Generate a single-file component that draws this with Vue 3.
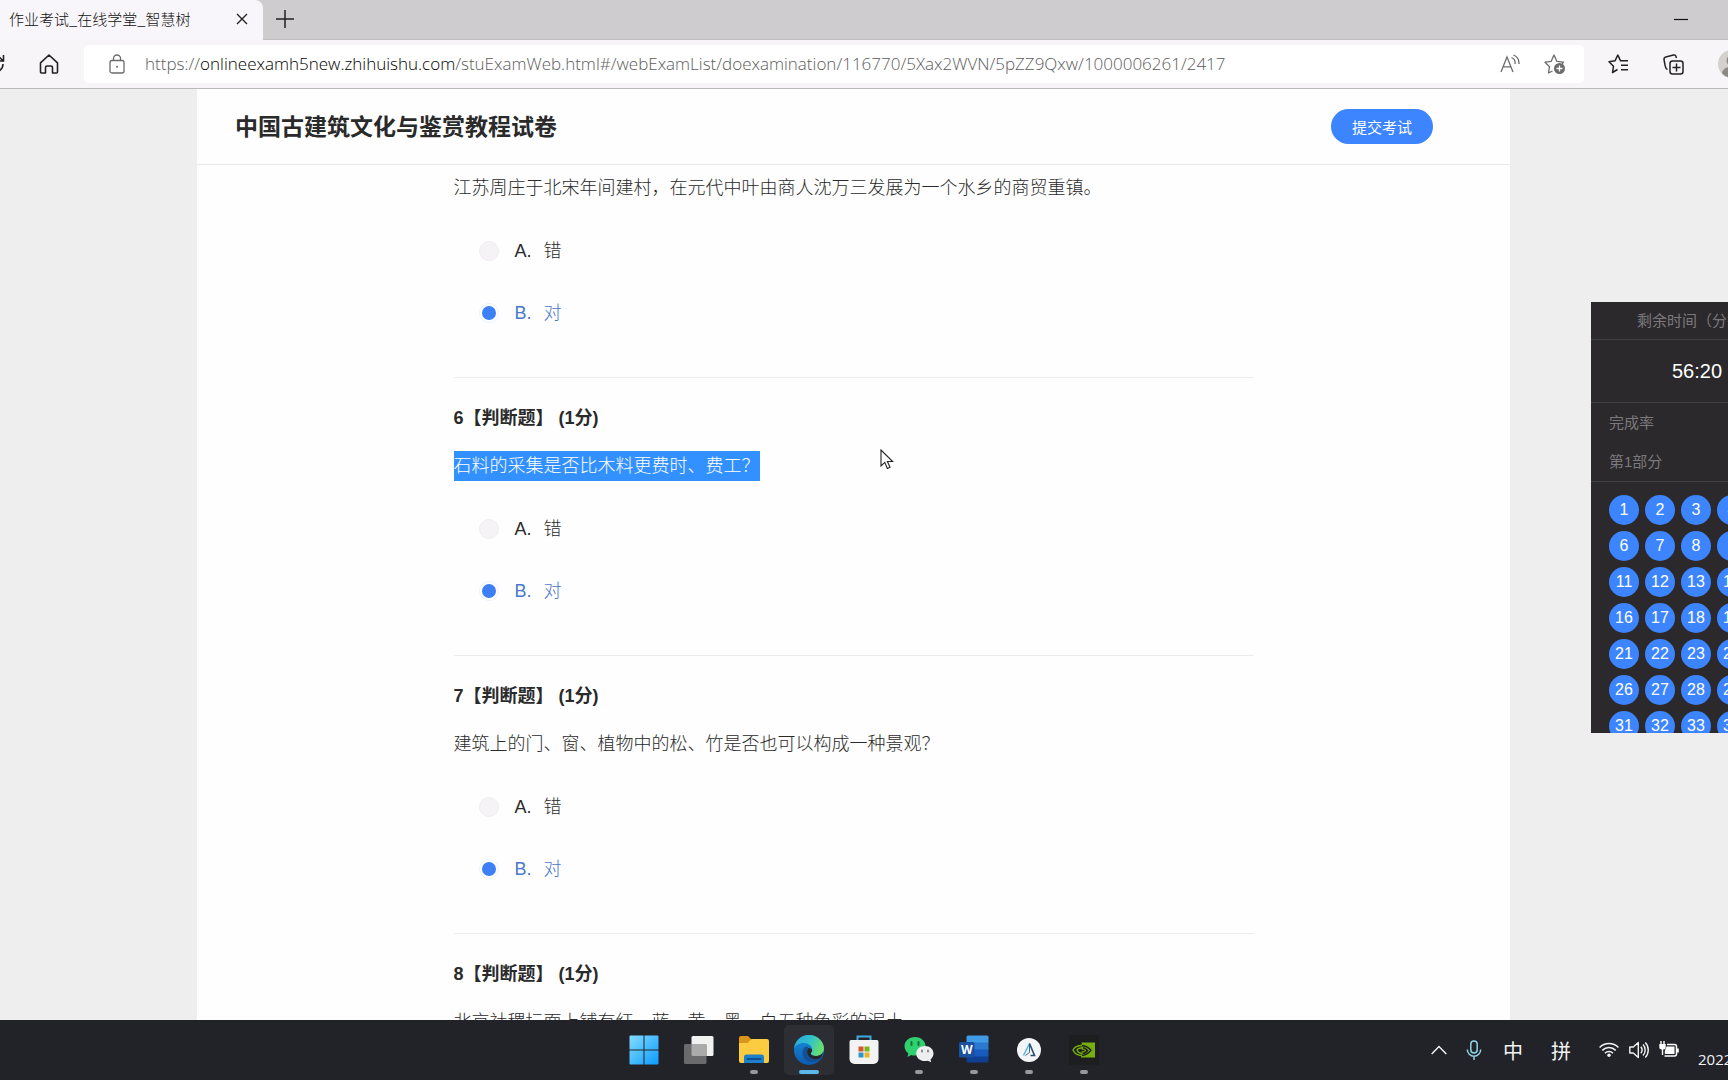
<script setup>
import { ref } from 'vue'

const questions = ref([
  {
    id: 5,
    text: '江苏周庄于北宋年间建村，在元代中叶由商人沈万三发展为一个水乡的商贸重镇。',
    answer: 'B',
  },
  { id: 6, title: '6【判断题】 (1分)', text: '石料的采集是否比木料更费时、费工？', answer: 'B', selected: true },
  { id: 7, title: '7【判断题】 (1分)', text: '建筑上的门、窗、植物中的松、竹是否也可以构成一种景观？', answer: 'B' },
  { id: 8, title: '8【判断题】 (1分)', text: '北京社稷坛面上铺有红、蓝、黄、黑、白五种色彩的泥土' },
])
const options = [
  { key: 'A', label: '错' },
  { key: 'B', label: '对' },
]
const numbers = Array.from({ length: 35 }, (_, i) => i + 1)
</script>

<template>
  <div class="screen">
    <header class="tabs">
      <div class="tab">
        <span class="tab-name">作业考试_在线学堂_智慧树</span>
        <button class="icon" aria-label="关闭标签页">
          <svg width="12" height="12" viewBox="0 0 12 12"><path d="M1 1l10 10M11 1L1 11" stroke="#222" stroke-width="1.4" fill="none" /></svg>
        </button>
      </div>
      <button class="icon plus" aria-label="新建标签页">
        <svg width="18" height="18" viewBox="0 0 18 18"><path d="M9 0v18M0 9h18" stroke="#222" stroke-width="1.5" fill="none" /></svg>
      </button>
      <button class="icon minimize" aria-label="最小化">
        <svg width="14" height="14" viewBox="0 0 14 14"><path d="M0 7.500h14" stroke="#111" stroke-width="1.2" /></svg>
      </button>
    </header>

    <nav class="toolbar">
      <button class="icon refresh" aria-label="刷新">
        <svg width="20" height="20" viewBox="0 0 20 20" fill="none" stroke="#222" stroke-width="1.6"><path d="M18 10a8 8 0 1 1-2.500-5.800L18 7M18.500 1v6h-6" /></svg>
      </button>
      <button class="icon home" aria-label="主页">
        <svg width="20" height="20" viewBox="0 0 20 20" fill="none" stroke="#222" stroke-width="1.600" stroke-linejoin="round"><path d="M1.500 8.800L10 1l8.500 7.800V18a1 1 0 0 1-1 1h-4v-5.500a1.500 1.500 0 0 0-1.500-1.500H8a1.500 1.500 0 0 0-1.500 1.500V19h-4a1 1 0 0 1-1-1z" /></svg>
      </button>
      <div class="address">
        <svg class="lock" width="16" height="20" viewBox="0 0 16 20" fill="none" stroke="#6b6b6b" stroke-width="1.300"><rect x="1" y="6.500" width="14" height="12.500" rx="2" /><path d="M4.500 6.500V4.500a3.500 3.500 0 0 1 7 0v2" /><circle cx="8" cy="12.800" r="1" fill="#6b6b6b" stroke="none" /></svg>
        <div class="url" role="textbox" aria-label="地址栏" tabindex="0">https://<b>onlineexamh5new.zhihuishu.com</b>/stuExamWeb.html#/webExamList/doexamination/116770/5Xax2WVN/5pZZ9Qxw/1000006261/2417</div>
        <button class="icon" aria-label="大声朗读">
          <svg width="20" height="20" viewBox="0 0 20 20" fill="none" stroke="#6b6b6b" stroke-width="1.300"><path d="M1 18L7 3l6 15M3.200 12.800h7.600M11.500 3.500a6 6 0 0 1 3.500 6.500M13.500 1a9 9 0 0 1 5.500 9" /></svg>
        </button>
        <button class="icon" aria-label="收藏">
          <svg width="22" height="22" viewBox="0 0 22 22" fill="none" stroke="#6b6b6b" stroke-width="1.300" stroke-linejoin="round"><path d="M8.500 18L4.500 20l1-6.300L1 9.200l6.200-.9L10 2l2.800 6.300 6.700.9-1.500 1.500" /><circle cx="15.500" cy="15.500" r="5.500" fill="#6b6b6b" stroke="none" /><path d="M15.500 12.500v6M12.500 15.500h6" stroke="#fff" /></svg>
        </button>
      </div>
      <div class="tools">
        <button class="icon" aria-label="收藏夹">
          <svg width="21" height="20" viewBox="0 0 21 20" fill="none" stroke="#222" stroke-width="1.500" stroke-linejoin="round"><path d="M9.500 15.500L4.500 18.500l1-6.200L1 7.700l6-.9L9.800 1l2.800 5.800H20M13 11.300h7M13 15.800h7" /></svg>
        </button>
        <button class="icon" aria-label="集锦">
          <svg width="21" height="21" viewBox="0 0 21 21" fill="none" stroke="#222" stroke-width="1.500" stroke-linejoin="round"><rect x="7" y="7" width="13" height="13" rx="2.500" /><path d="M13.500 9.500v8M9.500 13.500h8M4.500 15.500C2.500 15 2.500 13 2 11L1 5.500Q.7 3.500 2.800 3L10.500 1q2-.5 2.500 1.500l.4 1.500" /></svg>
        </button>
        <button class="icon avatar" aria-label="用户">
          <svg width="28" height="28" viewBox="0 0 28 28"><circle cx="14" cy="14" r="14" fill="#d3d0ce" /><circle cx="14" cy="10.500" r="5.500" fill="#8b8886" /><path d="M4 23.500a10 7 0 0 1 20 0A14 14 0 0 1 4 23.500z" fill="#8b8886" /></svg>
        </button>
      </div>
    </nav>

    <main class="page">
      <div class="sheet">
        <div class="sheet-head">
          <h1>中国古建筑文化与鉴赏教程试卷</h1>
          <button class="submit">提交考试</button>
        </div>
        <div class="questions">
          <section v-for="q in questions" :key="q.id" class="question">
            <h2 v-if="q.title">{{ q.title }}</h2>
            <p class="stem"><mark v-if="q.selected">{{ q.text }}</mark><template v-else>{{ q.text }}</template></p>
            <div v-if="q.answer" class="options">
              <label v-for="o in options" :key="o.key" :class="{ chosen: q.answer === o.key }">
                <input v-model="q.answer" type="radio" :name="'q' + q.id" :value="o.key" />
                <span class="key">{{ o.key }}.</span>
                <span>{{ o.label }}</span>
              </label>
            </div>
          </section>
        </div>
      </div>

      <aside class="panel">
        <div class="panel-title">剩余时间（分钟）</div>
        <div class="timer">56:20</div>
        <div class="progress">
          <div>完成率</div>
          <div>第1部分</div>
        </div>
        <div class="grid">
          <button v-for="n in numbers" :key="n">{{ n }}</button>
        </div>
      </aside>

      <svg class="cursor" width="14" height="21" viewBox="0 0 14 21"><path d="M1 1v16l3.800-3.600L7.300 19.500l2.700-1.200-2.600-5.800h5.300z" fill="#fff" stroke="#222" stroke-width="1.100" /></svg>
    </main>

    <footer class="taskbar">
      <div class="apps">
        <button class="app" aria-label="开始">
          <svg width="30" height="30" viewBox="0 0 30 30"><defs><linearGradient id="win" x1="0" y1="0" x2="1" y2="1"><stop offset="0" stop-color="#83dcff" /><stop offset="1" stop-color="#0c9bff" /></linearGradient></defs><path d="M1.500.5H14.500V14.500H.5V1.500a1 1 0 0 1 1-1zM15.500.5H28.500a1 1 0 0 1 1 1V14.500H15.500zM.5 15.500H14.500V29.500H1.500a1 1 0 0 1-1-1zM15.500 15.500H29.500V28.500a1 1 0 0 1-1 1H15.500z" fill="url(#win)" /></svg>
        </button>
        <button class="app" aria-label="任务视图">
          <svg width="30" height="30" viewBox="0 0 30 30"><rect x="7.500" y="1" width="22" height="20" rx="1.500" fill="#f1f1f2" /><rect x="0" y="9" width="22.500" height="20" rx="1.500" fill="#6a6a6c" /><path d="M7.500 9h15v12H9a1.500 1.500 0 0 1-1.500-1.500z" fill="#aaaaab" /></svg>
        </button>
        <button class="app running" aria-label="文件资源管理器">
          <svg width="30" height="30" viewBox="0 0 30 30"><path d="M0 3a2 2 0 0 1 2-2h7l4 4-2 4H0z" fill="#d9961a" /><path d="M0 8h8.500l4-4H28a2 2 0 0 1 2 2v20a2 2 0 0 1-2 2H2a2 2 0 0 1-2-2z" fill="#fbcb40" /><path d="M5 28v-6a2.500 2.500 0 0 1 2.500-2.500h15A2.500 2.500 0 0 1 25 22v6z" fill="#1d80ca" /><path d="M8.500 24h13" stroke="#0d4f91" stroke-width="2" stroke-linecap="round" /></svg>
        </button>
        <button class="app running active" aria-label="Edge">
          <svg width="30" height="30" viewBox="0 0 30 30"><defs><linearGradient id="edge-a" x1="0" y1="0" x2="1" y2="0.300"><stop offset="0" stop-color="#2aa5e0" /><stop offset=".55" stop-color="#2fc1cc" /><stop offset="1" stop-color="#65dd73" /></linearGradient><linearGradient id="edge-b" x1="0" y1="0" x2="0" y2="1"><stop offset="0" stop-color="#1a8fdb" /><stop offset="1" stop-color="#0b5ab1" /></linearGradient></defs><circle cx="15" cy="15" r="15" fill="url(#edge-b)" /><path d="M0 14C.6 6 7 0 15 0s15 6 15 13.500c0 5-4 7.500-8 7.500-3.500 0-5.200-1.300-5.200-2.300 0-.9 1.400-1.500 1.400-4C18.200 11 14.500 8 10 8 5 8 1 10.500 0 14z" fill="url(#edge-a)" /><path d="M10 13c-4 6 .5 14 8 14 4 0 7.500-1.500 9.500-4.500C24.500 24.300 21 24.500 18 23.500c-4.500-1.500-6.500-6-3.500-11.500-1.500-.5-3.500 0-4.500 1z" fill="#124f95" /><path d="M14.500 13c2 0 3.700 1 3.700 2.500 0 1.200-1.400 2-1.400 3.200 0 1 1.700 2.300 5.200 2.300 3 0 5.800-1.500 7-4-.5 3-1.500 5-2.500 6-2.500 1.500-6 1.500-8.500.5-4.500-2-6.500-6.500-3.500-10.500z" fill="#25262c" /></svg>
        </button>
        <button class="app" aria-label="应用商店">
          <svg width="30" height="30" viewBox="0 0 30 30"><path d="M8.500 6V1.500h13V6" fill="none" stroke="#3dacdc" stroke-width="2" /><path d="M.5 6.500a1.500 1.500 0 0 1 1.500-1.500h26a1.500 1.500 0 0 1 1.500 1.500V24a5 5 0 0 1-5 5h-19a5 5 0 0 1-5-5z" fill="#f3f3f4" /><path d="M9.500 11.500h5v5h-5z" fill="#d2562b" /><path d="M15.500 11.500h5v5h-5z" fill="#78b51b" /><path d="M9.500 17.500h5v5h-5z" fill="#2b96cb" /><path d="M15.500 17.500h5v5h-5z" fill="#eab32b" /></svg>
        </button>
        <button class="app running" aria-label="微信">
          <svg width="30" height="30" viewBox="0 0 30 30"><path d="M11 2c6 0 10.500 4 10.500 9S17 20.500 11 20.500c-1.300 0-2.500-.2-3.700-.6L3.500 22l.8-3.500C2 16.700.5 14 .5 11 .5 6 5 2 11 2z" fill="#30d06f" /><path d="M21 11c5 0 8.500 3.300 8.500 7.500 0 2.500-1.200 4.500-3 5.900l.7 2.900-3.400-1.600a10 10 0 0 1-2.800.4c-5 0-8.800-3.300-8.800-7.600S16 11 21 11z" fill="#eeeef0" /><path d="M7.500 7v3M14.500 7v3" stroke="#14733b" stroke-width="2" stroke-linecap="round" /><path d="M18 15.500v1M24 15.500v1" stroke="#8b8b8d" stroke-width="2" stroke-linecap="round" /></svg>
        </button>
        <button class="app running" aria-label="Word">
          <svg width="30" height="30" viewBox="0 0 30 30"><path d="M7.500 2a1.500 1.500 0 0 1 1.500-1.500h19a1.500 1.500 0 0 1 1.500 1.500v6h-22z" fill="#3f9be6" /><path d="M7.500 7.500h22v7.500h-22z" fill="#2a79cf" /><path d="M7.500 14.500h22V22h-22z" fill="#185abd" /><path d="M7.500 21.500h22V26a1.500 1.500 0 0 1-1.500 1.500H9A1.500 1.500 0 0 1 7.500 26z" fill="#103f91" /><rect x="0" y="7" width="15.500" height="15.500" rx="1.500" fill="#1b4f9f" /><text x="7.800" y="19" text-anchor="middle" font-family="Open Sans, sans-serif" font-size="12" font-weight="700" fill="#fff">W</text></svg>
        </button>
        <button class="app running" aria-label="A">
          <svg width="30" height="30" viewBox="0 0 30 30"><circle cx="15" cy="15" r="12" fill="#f4f5f7" /><path d="M15.500 8.500L9.500 20.500" stroke="#4bb4d8" stroke-width="1.400" /><path d="M15.500 9.500v8l-4 3" fill="none" stroke="#3c6b9c" stroke-width="1" /><path d="M15.500 8.500l5 12h-4" fill="none" stroke="#2a4d74" stroke-width="1.600" /></svg>
        </button>
        <button class="app running" aria-label="NVIDIA">
          <svg width="30" height="30" viewBox="0 0 30 30"><rect width="30" height="30" fill="#1c1e20" /><path d="M12 7.500h14v15H12z" fill="#78ad10" /><path d="M12 10.500c5 0 8 2.500 10 4.700-2 2.700-5.500 5.300-10 5.300V7.500" fill="none" stroke="#1c1e20" stroke-width="1.400" /><path d="M13 10.500C8 10.500 5 13 4 15c1.300 3 4.500 5.500 9 5.500M14 12.800c-3.500 0-5.500 1.200-6 2.200.8 2 3 3.500 5.500 3.500 2 0 3.800-1.300 5-3-1.400-1.600-3-2.700-4.500-2.700z" fill="none" stroke="#78ad10" stroke-width="1.400" /><path d="M14 12.800c1.500 0 3.100 1.100 4.500 2.700-1.200 1.700-3 3-5 3M12.500 15.500h3" fill="none" stroke="#1c1e20" stroke-width="1.500" /></svg>
        </button>
      </div>
      <div class="tray">
        <svg class="up" width="16" height="10" viewBox="0 0 16 10"><path d="M.7 9L8 1.500 15.300 9" fill="none" stroke="#f2f2f2" stroke-width="1.500" /></svg>
        <svg class="mic" width="16" height="20" viewBox="0 0 16 20" fill="none" stroke="#8fd3e6" stroke-width="1.500"><rect x="4.800" y="1" width="6.400" height="12" rx="3.200" /><path d="M1.300 9.500a6.700 6.700 0 0 0 13.400 0M8 16.200V20" /></svg>
        <span class="ime">中</span>
        <span class="ime">拼</span>
        <div class="status">
          <svg width="20" height="20" viewBox="0 0 20 20" fill="none" stroke="#f2f2f2" stroke-width="1.500"><path d="M.6 7.500a13.200 13.200 0 0 1 18.800 0M3.300 10.400a9.400 9.400 0 0 1 13.400 0M6 13.200a5.600 5.600 0 0 1 8 0" /><circle cx="10" cy="15.300" r="1.700" fill="#f2f2f2" stroke="none" /></svg>
          <svg width="20" height="20" viewBox="0 0 20 20" fill="none" stroke="#f2f2f2" stroke-width="1.400" stroke-linejoin="round"><path d="M.8 7h3.500L9.300 2.500v15L4.300 13H.8zM11.800 6.800a5 5 0 0 1 0 6.400M14 4.500a8 8 0 0 1 0 11M16.300 2.500a11 11 0 0 1 0 15" /></svg>
          <svg width="20" height="20" viewBox="0 0 20 20"><path d="M2 1v3M5 1v3" stroke="#fff" stroke-width="1.400" /><path d="M.3 4h6.400v3a2.500 2.500 0 0 1-2.500 2.500V15H2.800V9.500A2.500 2.500 0 0 1 .3 7z" fill="#fff" /><path d="M8 4.500h7.500a2 2 0 0 1 2 2v7.500a2 2 0 0 1-2 2H5.500" fill="none" stroke="#fff" stroke-width="1.500" /><path d="M7.500 6.500H15.500v7.500H5.800V11z" fill="#fff" /><path d="M18 8.500h1.800v4H18z" fill="#fff" /></svg>
        </div>
        <span class="date">2022</span>
      </div>
    </footer>
  </div>
</template>

<style>
body {
  overflow: hidden;
}
</style>

<style scoped>
.screen {
  height: 100vh;
  display: flex;
  flex-direction: column;
  overflow: hidden;
  color: #2a2a2a;
  font-family: "Liberation Sans", "Noto Sans CJK SC", sans-serif;
}
button {
  padding: 0;
  border: 0;
  background: none;
  font-family: inherit;
}
svg {
  display: block;
}
.icon {
  display: flex;
  flex: none;
}

.tabs {
  flex: none;
  display: flex;
  align-items: center;
  box-sizing: border-box;
  height: 40px;
  padding-bottom: 1px;
  border-bottom: 1px solid #c2bfc3;
  background: #cfccd0;
}
.tab {
  align-self: stretch;
  display: flex;
  align-items: center;
  justify-content: space-between;
  box-sizing: border-box;
  width: 263px;
  margin-bottom: -2px;
  padding: 0 15px 2px 9px;
  border-radius: 0 8px 0 0;
  background: #f8f6fa;
}
.tab-name {
  padding-bottom: 2px;
  font: 300 15px "Noto Sans CJK SC", sans-serif;
  color: #111;
}
.plus {
  margin-left: 13px;
}
.minimize {
  margin: 0 40px 0 auto;
}

.toolbar {
  flex: none;
  display: flex;
  align-items: center;
  height: 48px;
  border-bottom: 1px solid #b9b8bb;
  background: #f7f5f8;
}
.refresh {
  margin-left: -15px;
}
.home {
  margin: 0 25px 0 34px;
}
.address {
  flex: 1;
  display: flex;
  align-items: center;
  gap: 20px;
  box-sizing: border-box;
  height: 38px;
  padding: 0 18px 0 25px;
  border-radius: 5px;
  background: #fff;
}
.address .icon + .icon {
  margin-left: 4px;
}
.lock {
  flex: none;
}
.url {
  flex: 1;
  padding-bottom: 2px;
  overflow: hidden;
  white-space: nowrap;
  font: 300 17px "Open Sans", sans-serif;
  color: #5c5c5c;
}
.url b {
  font-weight: 300;
  color: #000;
}
.tools {
  display: flex;
  align-items: center;
  gap: 34px;
  padding-left: 24px;
}
.avatar {
  margin-right: -18px;
}

.page {
  position: relative;
  flex: 1;
  min-height: 0;
  overflow: hidden;
  background: #eeeeef;
}
.sheet {
  margin: 0 218px 0 197px;
  background: #fefefe;
}
.sheet-head {
  display: flex;
  align-items: center;
  justify-content: space-between;
  height: 75px;
  padding: 0 77px 0 38px;
  border-bottom: 1px solid #e9e9ea;
}
h1 {
  margin: 0;
  font-size: 23px;
  line-height: 32px;
}
.submit {
  width: 102px;
  height: 35px;
  border-radius: 18px;
  background: #3d84ff;
  color: #fff;
  font-size: 15px;
}
.questions {
  max-width: 800px;
  margin: 0 auto;
  padding: 8px 0 0;
}
.question {
  border-bottom: 1px solid #ececee;
  font-size: 18px;
}
h2 {
  margin: 0;
  padding: 28px 0 21px;
  font-size: 18px;
  line-height: 24px;
}
.stem {
  margin: 0;
  font-weight: 300;
  line-height: 30px;
  white-space: nowrap;
}
mark {
  display: inline-block;
  background: #3390ff;
  color: #fff;
}
.options {
  display: flex;
  flex-direction: column;
  gap: 38px;
  padding: 36px 0 52px 25px;
  font-weight: 300;
}
label {
  display: flex;
  align-items: center;
  line-height: 24px;
}
.chosen {
  color: #4a78cc;
}
input {
  appearance: none;
  box-sizing: border-box;
  width: 20px;
  height: 20px;
  margin: 0 16px 0 0;
  border: 1px solid #efedf0;
  border-radius: 50%;
  background: #f5f3f6;
}
input:checked {
  padding: 2px;
  border-color: #edf4ff;
  background: #3d80f5 content-box;
}
.key {
  width: 29px;
}

.panel {
  position: absolute;
  top: 213px;
  right: -75px;
  width: 212px;
  height: 431px;
  overflow: hidden;
  background: #2b292c;
  color: #7b797c;
  font-size: 15px;
}
.panel-title {
  line-height: 37px;
  border-bottom: 1px solid #414043;
  text-align: center;
}
.timer {
  line-height: 62px;
  border-bottom: 1px solid #414043;
  color: #fff;
  font-size: 20px;
  text-align: center;
}
.progress {
  padding: 0 18px;
  border-bottom: 1px solid #414043;
  line-height: 39px;
}
.grid {
  display: grid;
  grid-template-columns: repeat(5, 30px);
  gap: 6px;
  padding: 13px 18px;
}
.grid button {
  height: 30px;
  border-radius: 50%;
  background: #3d84ff;
  color: #fff;
  font-size: 16px;
}
.cursor {
  position: absolute;
  top: 360px;
  left: 880px;
}

.taskbar {
  flex: none;
  display: grid;
  grid-template-columns: 1fr auto 1fr;
  height: 60px;
  overflow: hidden;
  background: #212329;
}
.apps {
  grid-column: 2;
  display: flex;
  gap: 5px;
  padding: 5px 0;
}
.app {
  position: relative;
  display: flex;
  align-items: center;
  justify-content: center;
  width: 50px;
  height: 50px;
  border-radius: 5px;
}
.active {
  background: #2d2e34;
}
.running::after {
  content: "";
  position: absolute;
  bottom: 1px;
  left: 21px;
  width: 8px;
  height: 4px;
  border-radius: 2px;
  background: #97989c;
}
.active::after {
  left: 15px;
  width: 20px;
  background: #5cb8ea;
}
.tray {
  display: flex;
  align-items: center;
  justify-content: flex-end;
  color: #f2f2f2;
}
.up {
  margin-right: 19px;
}
.mic {
  margin-right: 21px;
}
.ime {
  margin-right: 28px;
  font-size: 20px;
}
.status {
  display: flex;
  gap: 10px;
  margin-right: 19px;
}
.date {
  width: 30px;
  padding-top: 18px;
  overflow: hidden;
  font: 15px "Open Sans", sans-serif;
}
</style>
